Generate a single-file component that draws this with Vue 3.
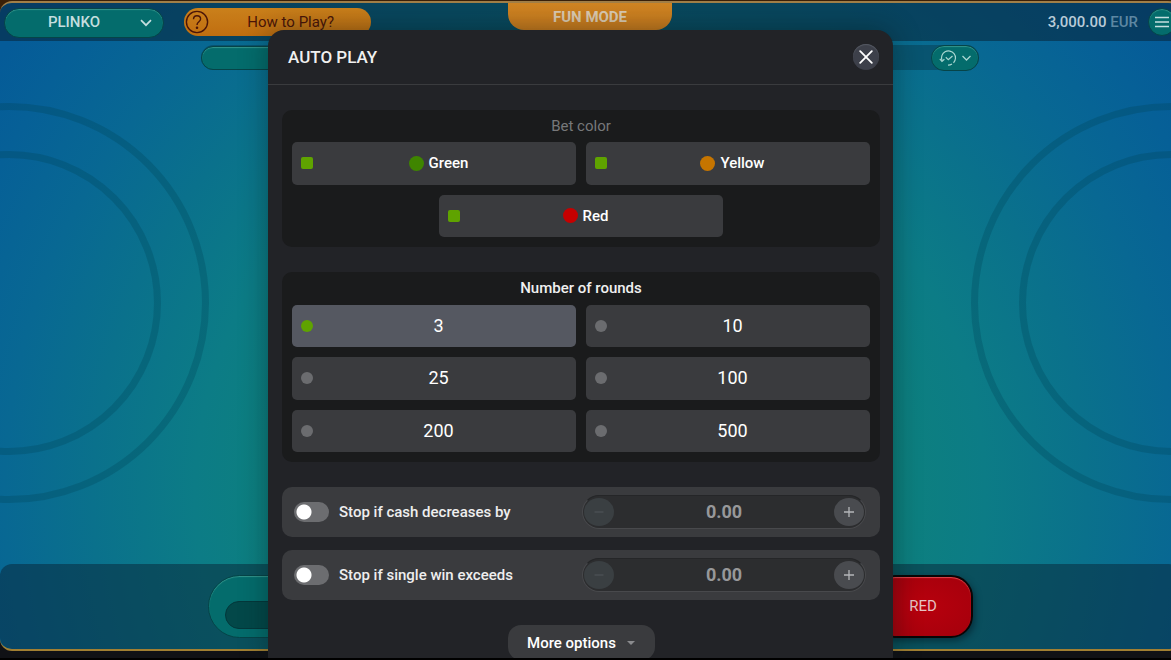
<script setup>
import { ref } from 'vue'

const game = ref('PLINKO')
const colors = ref([
  { name: 'Green', tone: 'green', on: true },
  { name: 'Yellow', tone: 'yellow', on: true },
  { name: 'Red', tone: 'red', on: true },
])
const roundOptions = [3, 10, 25, 100, 200, 500]
const rounds = ref(3)
const limits = ref([
  { id: 'cash', label: 'Stop if cash decreases by', on: false, value: '0.00' },
  { id: 'win', label: 'Stop if single win exceeds', on: false, value: '0.00' },
])
function step(limit, by) {
  limit.value = Math.max(0, Number(limit.value) + by).toFixed(2)
}
</script>

<template>
  <div class="page">
    <main class="game">
      <div class="rings rings-left"><i></i><i></i></div>
      <div class="rings rings-right"><i></i><i></i></div>

      <header class="topbar">
        <div class="topbar-left">
          <div class="picker">
            <select v-model="game" class="pill" aria-label="Game">
              <option>PLINKO</option>
            </select>
            <svg class="picker-arrow" viewBox="0 0 12 8" width="12" height="8" aria-hidden="true">
              <path d="M1 1.2 6 6.2 11 1.2" fill="none" stroke="currentColor" stroke-width="1.7" />
            </svg>
          </div>
          <button class="howto" type="button">
            <svg viewBox="0 0 24 24" width="24" height="24" fill="none" stroke="currentColor" stroke-width="1.4" aria-hidden="true">
              <circle cx="12" cy="12" r="10.6" />
              <path d="M8.500 9.300C8.500 7 10 5.700 12 5.700s3.600 1.300 3.600 3.300c0 2.600-3.600 2.900-3.600 5.900" />
              <circle cx="12" cy="17.800" r=".6" fill="currentColor" />
            </svg>
            <span>How to Play?</span>
          </button>
        </div>
        <div class="mode">FUN MODE</div>
        <div class="topbar-right">
          <p class="balance"><b>3,000.00</b> EUR</p>
          <button class="menu pill" type="button" aria-label="Menu">
            <svg viewBox="0 0 14 12" width="14" height="12" stroke="currentColor" stroke-width="1.4" aria-hidden="true">
              <path d="M0 1.500h14M0 6h14M0 10.500h14" />
            </svg>
          </button>
        </div>
      </header>

      <div class="subbar">
        <div class="subbar-slot pill"></div>
        <button class="history pill" type="button" aria-label="Bet history">
          <svg viewBox="0 0 18 18" width="18" height="18" fill="none" stroke="currentColor" stroke-width="1.200" aria-hidden="true">
            <path d="M3 11.500A7 7 0 1 1 14.500 13.800" />
            <path d="M13 15A7 7 0 0 1 9 16.200" />
            <path d="M.8 9.800 3 12.300 5.400 10.300" />
            <path d="M6.800 8.300 9.300 10.600 13.500 7" />
          </svg>
          <svg viewBox="0 0 9 6" width="9" height="6" fill="none" stroke="currentColor" stroke-width="1.300" aria-hidden="true">
            <path d="M.5 1 4.500 5 8.500 1" />
          </svg>
        </button>
      </div>

      <footer class="bottombar">
        <div class="bet pill"><div class="bet-slot"></div></div>
        <button class="bet-red" type="button">RED</button>
      </footer>
    </main>

    <div class="overlay">
      <section class="modal" role="dialog" aria-labelledby="dialog-title">
        <header class="modal-head">
          <h1 id="dialog-title">AUTO PLAY</h1>
          <button class="close" type="button" aria-label="Close">
            <svg viewBox="0 0 14 14" width="14" height="14" stroke="currentColor" stroke-width="1.800" stroke-linecap="round" aria-hidden="true">
              <path d="M1.200 1.200 12.800 12.800M12.800 1.200 1.200 12.800" />
            </svg>
          </button>
        </header>

        <div class="modal-body">
          <fieldset class="panel panel-colors">
            <legend class="muted">Bet color</legend>
            <div class="options color-options">
              <label v-for="c in colors" :key="c.name" class="option">
                <input v-model="c.on" type="checkbox" />
                <span class="color-name"><i class="dot" :class="c.tone"></i>{{ c.name }}</span>
              </label>
            </div>
          </fieldset>

          <fieldset class="panel panel-rounds">
            <legend>Number of rounds</legend>
            <div class="options round-options">
              <label v-for="n in roundOptions" :key="n" class="option" :class="{ selected: rounds === n }">
                <input v-model="rounds" type="radio" name="rounds" :value="n" />
                <span class="count">{{ n }}</span>
              </label>
            </div>
          </fieldset>

          <div v-for="l in limits" :key="l.id" class="limit">
            <label class="limit-switch">
              <input v-model="l.on" type="checkbox" />
              <span>{{ l.label }}</span>
            </label>
            <div class="stepper">
              <button class="minus" type="button" aria-label="Decrease" @click="step(l, -1)">
                <svg viewBox="0 0 12 12" width="12" height="12" stroke="currentColor" stroke-width="1"><path d="M1.500 6h9" /></svg>
              </button>
              <input v-model="l.value" type="text" :aria-label="l.label + ' amount'" />
              <button class="plus" type="button" aria-label="Increase" @click="step(l, 1)">
                <svg viewBox="0 0 12 12" width="12" height="12" stroke="currentColor" stroke-width="1.300"><path d="M1 6h10M6 1v10" /></svg>
              </button>
            </div>
          </div>

          <button class="more" type="button">
            More options
            <svg viewBox="0 0 8 4" width="8" height="4" fill="currentColor" aria-hidden="true"><path d="M0 0h8L4 4z" /></svg>
          </button>
        </div>
      </section>
    </div>
  </div>
</template>

<style>
body {
  background: #000;
}
</style>

<style scoped>
* {
  box-sizing: border-box;
}
button,
select,
input {
  font: inherit;
  color: inherit;
  margin: 0;
  padding: 0;
  border: 0;
}
svg {
  display: block;
}
.page {
  position: relative;
  display: flex;
  height: 100vh;
  overflow: hidden;
  padding: 1px 0 7px;
  background: linear-gradient(#3a2008, #3a2008) top / 100% 10px no-repeat, #101115;
  border-bottom: 2px solid #000;
  font-family: Roboto, "Liberation Sans", sans-serif;
  font-size: 15px;
  line-height: 20px;
  color: #fff;
}

/* Game board */
.game {
  position: relative;
  flex: none;
  width: calc(100% + 9px);
  display: flex;
  flex-direction: column;
  overflow: hidden;
  border-top: 2px solid #a17f48;
  border-bottom: 2px solid #a17f32;
  border-radius: 12px;
  background: radial-gradient(ellipse 62% 115% at 50% 76%, #0c8478 0%, #0d807e 42%, #0c7c86 54%, #0a718c 68%, #086893 80%, #066097 92%, #055b98 100%);
}
.rings {
  position: absolute;
  top: 100px;
  width: 400px;
  height: 400px;
  display: grid;
  place-items: center;
}
.rings-left {
  left: -191px;
}
.rings-right {
  right: -191px;
}
.rings i {
  grid-area: 1 / 1;
  width: 400px;
  height: 400px;
  border: 7px solid rgba(0, 70, 90, 0.3);
  border-radius: 50%;
}
.rings i + i {
  width: 304px;
  height: 304px;
}
.topbar {
  position: relative;
  display: grid;
  grid-template-columns: 1fr 164px 1fr;
  height: 38px;
  background: rgba(8, 36, 54, 0.54);
}
.pill {
  background: #046c6c;
  border: 1px solid #064448;
  border-radius: 32px;
  box-shadow: inset 0 1px 1px rgba(110, 200, 180, 0.45);
}
.topbar-left {
  display: flex;
  align-items: flex-start;
  gap: 20px;
  padding: 5px 4px;
}
.picker {
  display: flex;
  align-items: center;
  width: 160px;
  color: #c5dedf;
}
.picker select {
  appearance: none;
  flex: 1;
  height: 30px;
  padding: 0 20px 2px 0;
  text-align: center;
  text-align-last: center;
  font-weight: 500;
}
.picker-arrow {
  margin-left: -24px;
  margin-right: 12px;
  pointer-events: none;
}
.howto {
  display: flex;
  align-items: center;
  width: 187px;
  height: 28px;
  padding: 0 37px 0 1px;
  justify-content: space-between;
  border-radius: 14px;
  background: linear-gradient(#ca801b, #c06e10);
  color: #4b1508;
}
.mode {
  height: 27px;
  line-height: 28px;
  text-align: center;
  font-size: 15px;
  font-weight: 700;
  color: #dccbb2;
  background: linear-gradient(#d08523, #c97a1c);
  border-radius: 0 0 16px 16px;
}
.topbar-right {
  display: flex;
  justify-content: flex-end;
  align-items: flex-start;
  gap: 10px;
  padding: 5px 4px;
}
.balance {
  margin: 4px 0 0;
  font-weight: 500;
  color: #5d87a2;
}
.balance b {
  font-weight: 500;
  color: #b9cbd8;
}
.menu {
  width: 28px;
  height: 28px;
  display: grid;
  place-items: center;
  color: #c5dedf;
}
.subbar {
  position: relative;
  display: flex;
  justify-content: space-between;
  align-items: center;
  width: 778px;
  height: 25px;
  margin: 4px auto 0;
  border-radius: 13px;
  background: rgba(8, 60, 80, 0.5);
}
.subbar-slot {
  width: 400px;
  height: 24px;
}
.history {
  display: flex;
  align-items: center;
  justify-content: center;
  gap: 5px;
  width: 48px;
  height: 26px;
  color: #a8d6d0;
}
.bottombar {
  position: relative;
  display: flex;
  justify-content: space-between;
  align-items: flex-start;
  height: 85px;
  margin-top: auto;
  padding: 11px 207px 0 208px;
  background: rgba(8, 36, 54, 0.5);
  border-radius: 12px;
}
.bet {
  width: 200px;
  height: 63px;
  padding: 25px 16px 0;
}
.bet-slot {
  height: 28px;
  border: 1px solid #04383b;
  border-radius: 14px;
  background: #034849;
}
.bet-red {
  width: 100px;
  height: 63px;
  padding-bottom: 2px;
  border: 2px solid #0a0506;
  border-radius: 22px;
  background: radial-gradient(ellipse at center, #b8000d, #a4000c);
  box-shadow: inset 0 1px 1px rgba(255, 120, 120, 0.6), 2px 3px 6px rgba(0, 20, 30, 0.5);
  color: #e6c4c4;
}

/* Dialog */
.overlay {
  position: absolute;
  inset: 0;
  display: flex;
  justify-content: center;
  align-items: flex-start;
  padding: 30px 10px 0 0;
}
.modal {
  width: 625px;
  border-radius: 16px 16px 0 0;
  background: #222327;
  box-shadow: 0 0 28px rgba(0, 20, 20, 0.4);
}
.modal-head {
  display: flex;
  align-items: center;
  justify-content: space-between;
  height: 55px;
  padding: 0 14px 0 20px;
  border-bottom: 1px solid #3a3b3e;
}
.modal-head h1 {
  margin: 0;
  font-size: 17px;
  font-weight: 500;
  color: #f0f0f0;
}
.close {
  display: grid;
  place-items: center;
  width: 26px;
  height: 26px;
  border-radius: 50%;
  background: #3d404a;
  box-shadow: inset 0 1px 1px #565a64;
}
.modal-body {
  display: flex;
  flex-direction: column;
  padding: 25px 13px 0 14px;
}
.panel {
  min-width: 0;
  margin: 0;
  border: 0;
  padding: 0 10px 10px;
  border-radius: 10px;
  background: #1a1b1c;
}
.panel-rounds {
  margin: 25px 0;
}
.panel legend {
  float: left;
  width: 100%;
  padding: 6px 0;
  text-align: center;
  font-weight: 500;
  color: #f0f0f0;
}
.panel legend.muted {
  font-weight: 400;
  color: #77787a;
}
.panel-rounds legend {
  padding-bottom: 7px;
}
.options {
  clear: both;
  display: grid;
  grid-template-columns: 1fr 1fr;
  grid-auto-rows: 1fr;
  gap: 10px;
}
.color-options {
  height: 95px;
}
.round-options {
  height: 147px;
}
.option {
  display: flex;
  align-items: center;
  padding: 0 9px;
  border-radius: 5px;
  background: #3a3b3e;
}
.color-options .option:last-child {
  grid-column: 1 / -1;
  justify-self: center;
  width: calc(50% - 5px);
}
.option.selected {
  background: #555861;
}
.option input {
  appearance: none;
  flex: none;
  width: 12px;
  height: 12px;
  background: #6b6c6f;
}
.option input[type="checkbox"] {
  border-radius: 2px;
}
.option input[type="radio"] {
  border-radius: 50%;
}
.option input:checked {
  background: #5fa300;
}
.option span {
  flex: 1;
  margin-right: 3px;
}
.color-name {
  display: flex;
  justify-content: center;
  align-items: center;
  gap: 5px;
  font-weight: 500;
}
.dot {
  width: 15px;
  height: 15px;
  border-radius: 50%;
}
.green {
  background: #3f8500;
}
.yellow {
  background: #c67500;
}
.red {
  background: #c60000;
}
.count {
  text-align: center;
  font-size: 18px;
}
.limit {
  display: flex;
  align-items: center;
  justify-content: space-between;
  height: 50px;
  margin-bottom: 13px;
  padding: 0 14px 0 12px;
  border-radius: 10px;
  background: #3a3b3e;
}
.limit-switch {
  display: flex;
  align-items: center;
  gap: 10px;
  font-weight: 500;
  color: #eee;
}
.limit-switch input {
  appearance: none;
  width: 35px;
  height: 20px;
  border-radius: 10px;
  background: radial-gradient(circle at 10px 10px, #fff 7px, transparent 8px) #6c6d70;
}
.limit-switch input:checked {
  background: radial-gradient(circle at 25px 10px, #fff 7px, transparent 8px) #5fa300;
}
.stepper {
  display: flex;
  align-items: center;
  width: 284px;
  height: 34px;
  padding: 0 1px;
  border: 1px solid #48494c;
  border-top-color: #252628;
  border-radius: 17px;
  background: #2c2d2f;
}
.stepper input {
  flex: 1;
  min-width: 0;
  background: none;
  text-align: center;
  font-size: 18px;
  font-weight: 700;
  color: #97989a;
}
.stepper button {
  display: grid;
  place-items: center;
  width: 30px;
  height: 28px;
  border-radius: 50%;
  background: #494b4f;
  color: #b4b6b9;
}
.stepper .minus {
  background: #3a3f42;
  color: #50565a;
}
.more {
  display: flex;
  align-items: center;
  justify-content: center;
  gap: 11px;
  align-self: center;
  width: 147px;
  height: 35px;
  margin-top: 12px;
  border-radius: 13px;
  background: #3a3b3e;
  font-weight: 500;
}
.more svg {
  color: #8a8b8e;
}
</style>
